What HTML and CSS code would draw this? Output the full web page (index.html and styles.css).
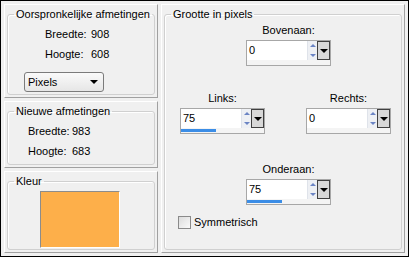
FILE: index.html
```html
<!DOCTYPE html>
<html lang="nl">
<head>
    <meta charset="UTF-8">
    <title>Rand toevoegen</title>
    <link rel="stylesheet" href="styles.css">
</head>
<body>
<div class="window">
    <div class="left">
        <section class="panel panel-orig">
            <fieldset class="group">
                <legend>Oorspronkelijke afmetingen</legend>
                <div class="dim"><span class="dim-label">Breedte:</span><span>908</span></div>
                <div class="dim"><span class="dim-label">Hoogte:</span><span>608</span></div>
                <div class="select">
                    <span>Pixels</span>
                    <span class="select-arrow"></span>
                </div>
            </fieldset>
        </section>

        <section class="panel panel-new">
            <fieldset class="group">
                <legend>Nieuwe afmetingen</legend>
                <div class="dim"><span class="dim-label">Breedte:</span><span>983</span></div>
                <div class="dim"><span class="dim-label">Hoogte:</span><span>683</span></div>
            </fieldset>
        </section>

        <section class="panel panel-color">
            <fieldset class="group">
                <legend>Kleur</legend>
                <div class="swatch"></div>
            </fieldset>
        </section>
    </div>

    <section class="panel panel-size">
        <fieldset class="group">
            <legend>Grootte in pixels</legend>

            <div class="spin-field spin-center spin-first">
                <label>Bovenaan:</label>
                <div class="spin">
                    <div class="spin-main">
                        <span class="spin-value">0</span>
                        <span class="spin-arrows"><i class="up"></i><i class="down"></i></span>
                        <span class="spin-drop"></span>
                    </div>
                    <div class="spin-track"></div>
                </div>
            </div>

            <div class="spin-row">
                <div class="spin-field">
                    <label>Links:</label>
                    <div class="spin">
                        <div class="spin-main">
                            <span class="spin-value">75</span>
                            <span class="spin-arrows"><i class="up"></i><i class="down"></i></span>
                            <span class="spin-drop"></span>
                        </div>
                        <div class="spin-track"><div class="spin-bar" style="width: 35px"></div></div>
                    </div>
                </div>
                <div class="spin-field">
                    <label>Rechts:</label>
                    <div class="spin">
                        <div class="spin-main">
                            <span class="spin-value">0</span>
                            <span class="spin-arrows"><i class="up"></i><i class="down"></i></span>
                            <span class="spin-drop"></span>
                        </div>
                        <div class="spin-track"></div>
                    </div>
                </div>
            </div>

            <div class="spin-field spin-center">
                <label>Onderaan:</label>
                <div class="spin">
                    <div class="spin-main">
                        <span class="spin-value">75</span>
                        <span class="spin-arrows"><i class="up"></i><i class="down"></i></span>
                        <span class="spin-drop"></span>
                    </div>
                    <div class="spin-track"><div class="spin-bar" style="width: 35px"></div></div>
                </div>
            </div>

            <div class="check">
                <span class="check-box"></span>
                <span>Symmetrisch</span>
            </div>
        </fieldset>
    </section>
</div>
</body>
</html>
```

FILE: styles.css
```css
* {
    box-sizing: border-box;
}

body {
    margin: 0;
    padding: 0;
    font-family: 'Liberation Sans', Arial, sans-serif;
    font-size: 11px;
    line-height: 13px;
    color: #000;
    background: #f0f0f0;
}

.window {
    width: 409px;
    height: 257px;
    border: 1px solid #000;
    padding: 3px;
    display: flex;
    gap: 3px;
    background: #f0f0f0;
}

.left {
    width: 154px;
    display: flex;
    flex-direction: column;
    gap: 3px;
}

.panel {
    display: flex;
    border: 1px solid;
    border-color: #fff #a0a0a0 #a0a0a0 #fff;
    padding: 0 2px 2px 2px;
}

.panel-orig {
    height: 94px;
}

.panel-new {
    height: 67px;
}

.panel-color {
    flex: 1;
}

.panel-size {
    flex: 1;
}

.group {
    flex: 1;
    margin: 3px 0 0 0;
    padding: 0;
    min-width: 0;
    border: 1px solid #d0d0d0;
    border-radius: 3px;
    box-shadow: inset 1px 1px #fff;
}

legend {
    margin-left: 6px;
    padding: 0 2px;
    white-space: nowrap;
}

/* left column readouts */

.dim {
    margin-left: 37px;
    margin-top: 7px;
    height: 13px;
    white-space: nowrap;
}

.dim-label {
    display: inline-block;
    width: 46px;
}

.panel-new .dim {
    margin-left: 20px;
}

.panel-new .dim-label {
    width: 44px;
}

.select {
    margin: 11px 0 0 16px;
    width: 80px;
    height: 20px;
    border: 1px solid #7b7b7b;
    border-radius: 3px;
    background: linear-gradient(#fafafa, #e6e6e6);
    display: flex;
    align-items: center;
    justify-content: space-between;
    padding: 0 5px 0 3px;
}

.select-arrow {
    width: 0;
    height: 0;
    border-left: 4px solid transparent;
    border-right: 4px solid transparent;
    border-top: 4px solid #000;
}

.swatch {
    width: 80px;
    height: 57px;
    margin: 3px 0 0 32px;
    background: #fdaf4a;
    border: 1px solid;
    border-color: #8c8c8c #fff #fff #8c8c8c;
}

/* spin controls */

.spin-field {
    width: 85px;
    text-align: center;
}

.spin-field label {
    display: block;
    height: 13px;
    margin-bottom: 3px;
}

.spin-center {
    margin-left: 81px;
}

.spin-first {
    margin-top: 3px;
}

.spin-row {
    display: flex;
    gap: 41px;
    margin: 26px 0 0 15px;
}

.spin-row + .spin-center {
    margin-top: 29px;
}

.spin {
    border: 1px solid #a7a7a7;
    background: #f4f4f4;
    text-align: left;
}

.spin-main {
    display: flex;
    height: 19px;
    background: #fff;
}

.spin-value {
    flex: 1;
    padding: 3px 0 0 2px;
}

.spin-arrows {
    width: 10px;
    display: flex;
    flex-direction: column;
    background: #eef0f4;
    border-left: 1px solid #dfe3ea;
}

.spin-arrows i {
    flex: 1;
    display: flex;
    align-items: center;
    justify-content: center;
}

.spin-arrows .up::before,
.spin-arrows .down::before {
    content: "";
    width: 0;
    height: 0;
    border-left: 3px solid transparent;
    border-right: 3px solid transparent;
}

.spin-arrows .up::before {
    border-bottom: 3px solid #6b84c4;
}

.spin-arrows .down::before {
    border-top: 3px solid #6b84c4;
}

.spin-drop {
    width: 13px;
    background: #d8d8d8;
    border: 1px solid #404040;
    display: flex;
    align-items: center;
    justify-content: center;
}

.spin-drop::before {
    content: "";
    width: 0;
    height: 0;
    border-left: 4px solid transparent;
    border-right: 4px solid transparent;
    border-top: 4px solid #000;
}

.spin-track {
    height: 5px;
    padding-top: 1px;
}

.spin-bar {
    height: 3px;
    background: #3b8de6;
}

.check {
    display: flex;
    align-items: center;
    gap: 3px;
    margin: 11px 0 0 13px;
}

.check-box {
    width: 13px;
    height: 13px;
    border: 1px solid #8a8a8a;
    background: linear-gradient(135deg, #dcdcdc, #fafafa);
}
```
